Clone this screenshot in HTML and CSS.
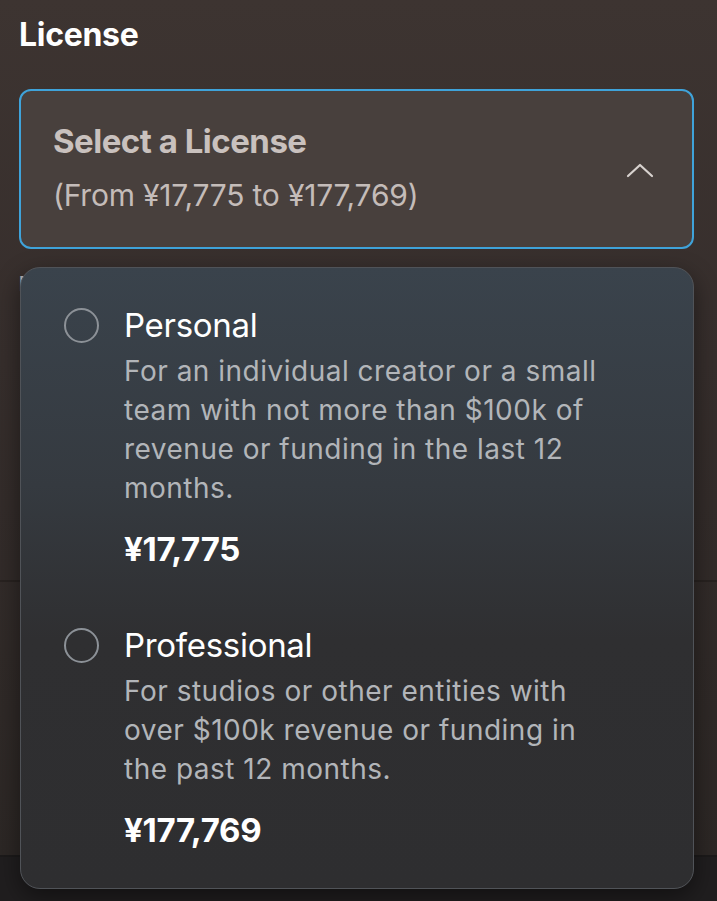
FILE: index.html
```html
<!DOCTYPE html>
<html lang="en">
<head>
  <meta charset="UTF-8">
  <meta name="viewport" content="width=device-width, initial-scale=1">
  <title>License</title>
  <link rel="stylesheet" href="styles.css">
</head>
<body>
  <div class="page">
    <h2 class="field-label">License</h2>

    <div class="field">
      <button class="select-box" type="button">
        <span class="select-text">
          <span class="select-title">Select a License</span>
          <span class="select-range">(From ¥17,775 to ¥177,769)</span>
        </span>
        <svg class="chevron" width="28" height="16" viewBox="0 0 28 16">
          <path d="M2 14 L14 3 L26 14" fill="none" stroke="#d8d2cf" stroke-width="2.2" stroke-linecap="round" stroke-linejoin="round"/>
        </svg>
      </button>

      <!-- content under the open menu -->
      <div class="under">
        <div class="under-row">
          <span class="under-label">Price</span>
        </div>
        <div class="under-row under-row-last"></div>
        <div class="footer"></div>
      </div>

      <!-- License menu (open) -->
      <div class="menu">
        <label class="option">
          <span class="radio"></span>
          <span class="option-body">
            <span class="option-name">Personal</span>
            <span class="option-desc">For an individual creator or a small team with not more than $100k of revenue or funding in the last 12 months.</span>
            <span class="option-price">¥17,775</span>
          </span>
        </label>
        <label class="option">
          <span class="radio"></span>
          <span class="option-body">
            <span class="option-name">Professional</span>
            <span class="option-desc">For studios or other entities with over $100k revenue or funding in the past 12 months.</span>
            <span class="option-price">¥177,769</span>
          </span>
        </label>
      </div>
    </div>
  </div>
</body>
</html>
```

FILE: styles.css
```css
body {
  margin: 0;
  font-family: Inter, "Noto Sans", sans-serif;
  background: linear-gradient(180deg, #3d3431 0%, #362e2c 40%, #2c2725 95%);
  color: #fff;
  height: 901px;
  overflow: hidden;
}
.page {
  padding: 0 23px 0 19px;
}
.field-label {
  margin: 0;
  padding-top: 15px;
  height: 89px;
  box-sizing: border-box;
  font-size: 32px;
  line-height: 40px;
  font-weight: 700;
  letter-spacing: -0.3px;
}
.field {
  position: relative;
}
.select-box {
  display: flex;
  align-items: center;
  justify-content: space-between;
  width: 100%;
  height: 160px;
  padding: 0 38px 4px 32px;
  box-sizing: border-box;
  background: #48403d;
  border: 2px solid #3fa3da;
  border-radius: 12px;
  font-family: inherit;
  text-align: left;
  cursor: pointer;
}
.select-text {
  display: flex;
  flex-direction: column;
  gap: 16px;
}
.select-title {
  font-size: 33px;
  line-height: 40px;
  font-weight: 700;
  color: #c9c1be;
  letter-spacing: -0.5px;
}
.select-range {
  font-size: 30px;
  line-height: 36px;
  color: #c4bcb9;
  letter-spacing: -0.2px;
}
.chevron {
  margin-top: 6px;
}

/* stuff behind the menu */
.under {
  margin: 0 -23px 0 -19px;
}
.under-row {
  height: 333px;
  padding: 23px 23px 0 19px;
  box-sizing: border-box;
  border-bottom: 2px solid #282220;
}
.under-row-last {
  height: 275px;
  border-bottom: 2px solid #1c1a1a;
}
.under-label {
  display: block;
  font-size: 20px;
  font-weight: 700;
  color: #bdb6b3;
}
.footer {
  height: 60px;
  background: #201e1f;
}

/* open menu */
.menu {
  position: absolute;
  top: 178px;
  left: 1px;
  right: 0;
  height: 622px;
  box-sizing: border-box;
  padding: 37px 30px 0 43px;
  background: linear-gradient(180deg, #3a434c 0%, #353a40 35%, #2f2f31 60%, #2e2e30 100%);
  border: 1px solid #505358;
  border-radius: 20px;
  box-shadow: 0 8px 24px rgba(0, 0, 0, 0.45);
}
.option {
  display: flex;
  gap: 25px;
  margin-bottom: 56px;
  cursor: pointer;
}
.radio {
  flex: none;
  width: 31px;
  height: 31px;
  margin-top: 3px;
  border: 2px solid #8c9197;
  border-radius: 50%;
}
.option-body {
  display: flex;
  flex-direction: column;
  max-width: 492px;
}
.option-name {
  font-size: 33px;
  line-height: 40px;
  color: #fff;
  letter-spacing: -0.3px;
}
.option-desc {
  font-size: 28px;
  line-height: 39px;
  color: #b2b5b9;
  letter-spacing: 0.5px;
  margin-top: 7px;
}
.option-price {
  font-size: 33px;
  line-height: 40px;
  font-weight: 700;
  color: #fff;
  margin-top: 21px;
  letter-spacing: -0.3px;
}
```
